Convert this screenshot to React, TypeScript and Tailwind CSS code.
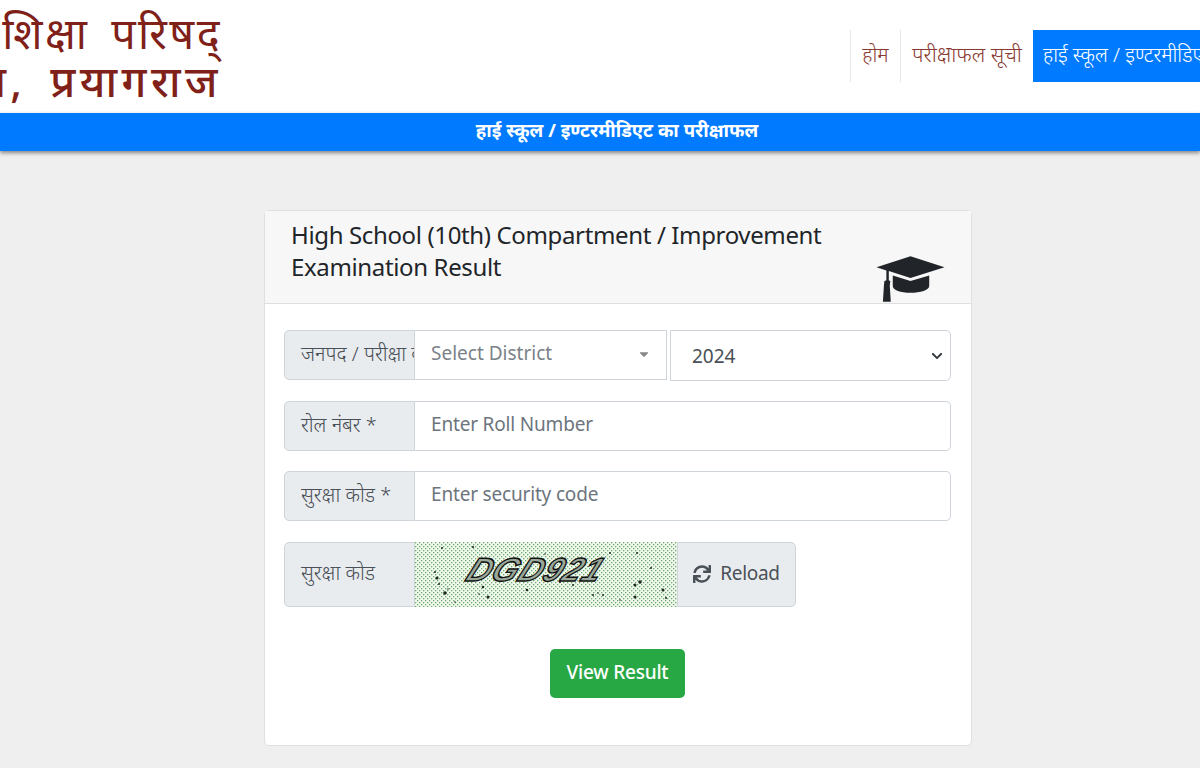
import { FaCaretDown, FaChevronDown, FaSync } from 'react-icons/fa'

const ui = "font-['Noto_Sans','Noto_Sans_Devanagari','Lohit_Devanagari',sans-serif]"

function Label({ text, h }: { text: string; h: string }) {
  return (
    <div
      className={`flex w-[131px] shrink-0 items-center overflow-hidden whitespace-nowrap rounded-l-[5px] border border-[#ced4da] bg-[#e9ecef] pb-[3px] pl-4 text-[20px] font-light text-[#495057] ${h}`}
    >
      {text}
    </div>
  )
}

function TextRow({ label, placeholder }: { label: string; placeholder: string }) {
  return (
    <div className="mb-[20px] flex">
      <Label text={label} h="h-[50px]" />
      <div className="flex h-[50px] flex-1 items-center rounded-r-[5px] border border-l-0 border-[#ced4da] bg-white pb-[3px] pl-4 text-[19px] tracking-[-0.18px] text-[#6c757d]">
        {placeholder}
      </div>
    </div>
  )
}

function GradCap() {
  return (
    <svg width="69" height="47" viewBox="0 0 70 47" className="mt-[36px] shrink-0" fill="#212529">
      <path d="M35 1 L69.5 12 L35 23 L13 16 L13 27 L10.5 27 L10.5 15.5 L0.5 12 Z" />
      <path d="M17 20.5 L35 26 L54 20.5 L54 31 C54 35 45 38 35 38 C25 38 17 35 17 31 Z" />
      <path d="M8.5 26 C10.5 25 13 25 14.5 26 L14 31 L15 47 L7 47 L8 31 Z" />
    </svg>
  )
}

function Captcha() {
  const dots: [number, number, number][] = [
    [22, 36, 1.6], [20, 30, 1], [24, 42, 1], [30, 51, 1.8], [33, 47, 0.8], [68, 45, 1.3], [73, 55, 1.5],
    [64, 52, 0.8], [112, 48, 1.3], [58, 5, 1.1], [27, 6, 1], [222, 11, 1], [236, 26, 1], [225, 40, 1.8],
    [220, 43, 1.5], [248, 48, 1.5], [220, 55, 1.5], [251, 56, 1], [178, 53, 1], [188, 53, 1], [183, 51, 0.8],
    [158, 43, 1], [145, 40, 1], [195, 11, 1], [130, 12, 0.8], [40, 60, 0.8], [205, 58, 0.8],
  ]
  return (
    <svg width="262" height="65" className="block shrink-0 bg-[#f1f8ee]">
      <defs>
        <pattern id="dither" width="4" height="4" patternUnits="userSpaceOnUse">
          <rect x="0" y="0" width="1.3" height="1.3" fill="#6aa86a" />
          <rect x="2" y="2" width="1.3" height="1.3" fill="#6aa86a" />
        </pattern>
      </defs>
      <rect width="262" height="65" fill="url(#dither)" />
      {dots.map(([x, y, r], i) => (
        <circle key={i} cx={x} cy={y} r={r} fill="#1f2a1f" />
      ))}
      <text
        transform="translate(49 39) skewX(-24)"
        fontFamily="Liberation Sans, sans-serif"
        fontStyle="italic"
        fontWeight="700"
        fontSize="33"
        letterSpacing="1"
        fill="#9aa89a"
        stroke="#111"
        strokeWidth="1.4"
      >
        DGD921
      </text>
    </svg>
  )
}

export default function App() {
  return (
    <div className={`${ui} h-[768px] w-[1200px] overflow-hidden bg-[#efefef]`}>
      <header className="flex h-[113px] items-start justify-between bg-white">
        <div className="flex w-[222px] flex-col items-end overflow-hidden whitespace-nowrap pt-[8px] text-[#7f2118]">
          <div className="text-[43px] leading-[50px] tracking-[2.5px] [word-spacing:8px]">माध्यमिक शिक्षा परिषद्</div>
          <div className="text-[43px] font-medium leading-[46px] tracking-[4.5px] [word-spacing:8px]">
            उत्तर प्रदेश, प्रयागराज
          </div>
        </div>
        <nav className="mt-[30px] flex h-[52px] w-[350px] overflow-hidden whitespace-nowrap text-[20px] font-light">
          <div className="flex w-[50px] shrink-0 items-center justify-center border-l border-[#e6e6e6] pb-[3px] text-[#8a3a32]">
            होम
          </div>
          <div className="flex w-[133px] shrink-0 items-center justify-center border-l border-[#e6e6e6] pb-[3px] text-[21px] text-[#8a3a32]">
            परीक्षाफल सूची
          </div>
          <div className="flex shrink-0 items-center bg-[#007bff] px-[10px] pb-[3px] text-white">
            हाई स्कूल / इण्टरमीडिएट का परीक्षाफल
          </div>
        </nav>
      </header>

      <div className="flex h-[38px] items-center justify-center bg-[#007bff] pb-[4px] pl-[34px] text-[18.6px] font-bold text-white shadow-[0_2px_4px_rgba(0,0,0,0.45)]">
        हाई स्कूल / इण्टरमीडिएट का परीक्षाफल
      </div>

      <main className="ml-[264px] mt-[59px] h-[536px] w-[708px] rounded-[5px] border border-[#dfdfdf] bg-white">
        <div className="flex h-[93px] justify-between border-b border-[#dfdfdf] bg-[#f7f7f7] pl-[26px] pr-[26px] pt-[8px] text-[24px] leading-[32px] tracking-[-0.36px] text-[#212529]">
          <div className="w-[560px]">High School (10th) Compartment / Improvement Examination Result</div>
          <GradCap />
        </div>

        <div className="pl-[19px] pr-[20px] pt-[26px]">
          <div className="mb-[20px] flex">
            <Label text="जनपद / परीक्षा का वर्ष *" h="h-[50px]" />
            <div className="flex h-[50px] w-[252px] items-center justify-between border border-l-0 border-[#ced4da] bg-white pb-[3px] pl-4 pr-[15px] text-[19px] text-[#7a8288]">
              Select District
              <FaCaretDown className="text-[#888888]" size={14} />
            </div>
            <div className="ml-[3px] flex h-[51px] flex-1 items-center justify-between rounded-r-[5px] border border-[#ced4da] bg-white pl-[21px] pr-[7px] pt-[1px] text-[19px] text-[#495057]">
              2024
              <FaChevronDown className="text-[#343a40]" size={12} />
            </div>
          </div>

          <TextRow label="रोल नंबर *" placeholder="Enter Roll Number" />
          <TextRow label="सुरक्षा कोड *" placeholder="Enter security code" />

          <div className="mt-[21px] flex">
            <Label text="सुरक्षा कोड" h="h-[65px]" />
            <Captcha />
            <div className="flex h-[65px] w-[119px] items-center justify-center gap-[9px] rounded-r-[5px] border border-[#ced4da] bg-[#e9ecef] pb-[3px] text-[19px] tracking-[-0.3px] text-[#495057]">
              <FaSync className="mt-[2px]" size={18} />
              Reload
            </div>
          </div>

          <div className="mt-[42px] flex justify-center">
            <button className="h-[49px] w-[135px] rounded-[5px] bg-[#28a745] pb-[3px] text-[19px] font-medium tracking-[-0.2px] text-white">
              View Result
            </button>
          </div>
        </div>
      </main>
    </div>
  )
}
